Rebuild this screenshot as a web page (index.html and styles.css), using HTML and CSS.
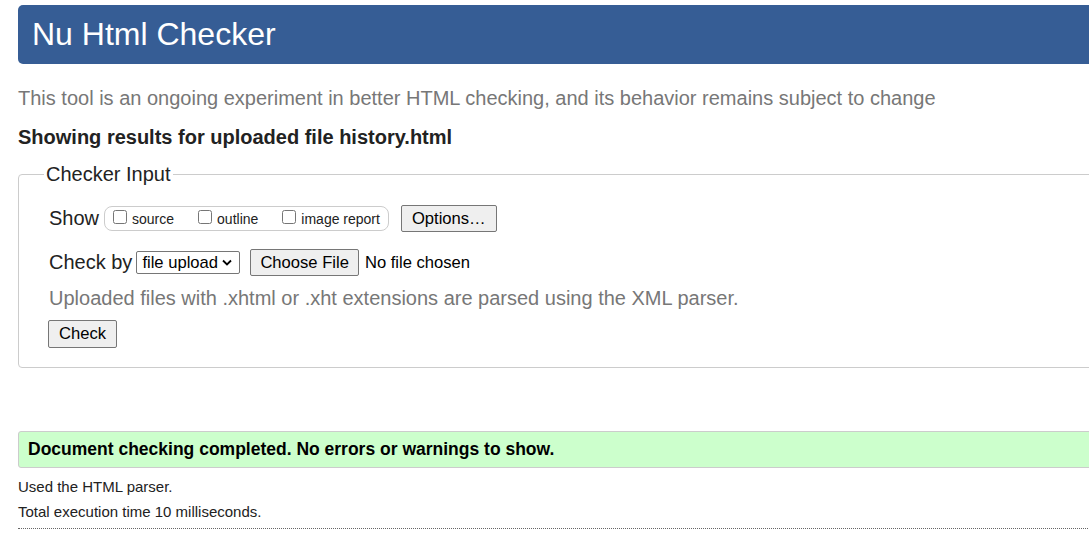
FILE: index.html
```html
<!DOCTYPE html>
<html lang="en">
<head>
<meta charset="utf-8">
<title>Nu Html Checker</title>
<link rel="stylesheet" href="styles.css">
</head>
<body>
<div class="page">
  <h1 class="banner">Nu Html Checker</h1>
  <p class="intro">This tool is an ongoing experiment in better HTML checking, and its behavior remains subject to change</p>
  <p class="showing">Showing results for uploaded file history.html</p>
  <fieldset class="input">
    <legend>Checker Input</legend>
    <div class="row show-row">
      <span class="lbl">Show</span>
      <span class="pill">
        <label class="opt"><input type="checkbox"><span>source</span></label>
        <label class="opt"><input type="checkbox"><span>outline</span></label>
        <label class="opt"><input type="checkbox"><span>image report</span></label>
      </span>
      <button class="btn options" type="button">Options…</button>
    </div>
    <div class="row by-row">
      <span class="lbl">Check by</span>
      <span class="selwrap">
        <select class="sel"><option>file upload</option></select>
        <svg class="chev" width="10" height="7" viewBox="0 0 10 7" aria-hidden="true"><path d="M1 1.5 L5 5.5 L9 1.5" fill="none" stroke="#000" stroke-width="1.8"/></svg>
      </span>
      <button class="btn choose" type="button">Choose File</button>
      <span class="nofile">No file chosen</span>
    </div>
    <p class="hint">Uploaded files with .xhtml or .xht extensions are parsed using the XML parser.</p>
    <button class="btn check" type="button">Check</button>
  </fieldset>
  <div class="success">Document checking completed. No errors or warnings to show.</div>
  <p class="note">Used the HTML parser.</p>
  <p class="note">Total execution time 10 milliseconds.</p>
  <div class="rule"></div>
</div>
</body>
</html>
```

FILE: styles.css
```css
html, body {
  margin: 0;
  padding: 0;
  overflow: hidden;
  background: #fff;
}
body {
  font-family: "Liberation Sans", Arial, sans-serif;
  color: #222;
}
.page {
  width: 1200px;
  padding: 5px 0 0 18px;
}
.banner {
  margin: 0;
  height: 59px;
  box-sizing: border-box;
  padding: 0 14px;
  display: flex;
  align-items: center;
  background: #365d95;
  color: #fff;
  font-weight: normal;
  font-size: 32px;
  border-radius: 5px;
}
.intro {
  margin: 22px 0 0;
  font-size: 20px;
  line-height: 24px;
  color: #777;
}
.showing {
  margin: 15px 0 0;
  font-size: 20px;
  line-height: 24px;
  font-weight: bold;
  color: #222;
}
.input {
  margin: 14px 0 0;
  padding: 19px 30px 19px 30px;
  border: 1px solid #ccc;
  border-radius: 4px;
}
.input legend {
  font-size: 20px;
  padding: 0 2px;
  margin-left: -5px;
  color: #222;
}
.row {
  display: flex;
  align-items: center;
}
.lbl {
  font-size: 20px;
  margin-right: 5px;
}
.pill {
  display: inline-flex;
  align-items: center;
  border: 1px solid #ccc;
  border-radius: 8px;
  height: 23px;
  padding: 0 8px 0 8px;
  gap: 24px;
}
.opt {
  display: inline-flex;
  align-items: center;
  font-size: 14px;
}
.opt input {
  margin: -4px 5px 0 0;
  width: 14px;
  height: 14px;
}
.btn {
  font-family: "Liberation Sans", Arial, sans-serif;
  font-size: 16.6px;
  background: #efefef;
  border: 1px solid #767676;
  border-radius: 2px;
  color: #000;
  padding: 0 10px;
}
.options {
  margin-left: 12px;
  height: 27px;
}
.by-row {
  margin-top: 17px;
}
.selwrap {
  position: relative;
  display: inline-flex;
}
.sel {
  appearance: none;
  -webkit-appearance: none;
  font-family: "Liberation Sans", Arial, sans-serif;
  font-size: 16.6px;
  color: #000;
  width: 104px;
  height: 23px;
  padding: 0 0 0 5px;
  margin: 0 0 0 -1px;
  border: 1px solid #767676;
  border-radius: 2px;
  background: #fff;
}
.chev {
  position: absolute;
  right: 8px;
  top: 8px;
  pointer-events: none;
}
.choose {
  margin-left: 10px;
  height: 27px;
  padding: 0 9px;
}
.nofile {
  margin-left: 6px;
  font-size: 16.6px;
  color: #000;
}
.hint {
  margin: 10px 0 0;
  font-size: 20px;
  line-height: 24px;
  color: #777;
}
.check {
  margin: 10px 0 0 -1px;
  height: 28px;
}
.success {
  margin-top: 63px;
  height: 37px;
  box-sizing: border-box;
  display: flex;
  align-items: center;
  padding-left: 9px;
  background: #ccffcc;
  border: 1px solid #ccc;
  border-radius: 3px;
  font-size: 17.5px;
  font-weight: bold;
  color: #000;
}
.note {
  margin: 10px 0 0;
  font-size: 15px;
  line-height: 18px;
  color: #222;
}
.note + .note {
  margin-top: 7px;
}
.rule {
  margin-top: 7px;
  border-top: 1px dotted #666;
}
```
